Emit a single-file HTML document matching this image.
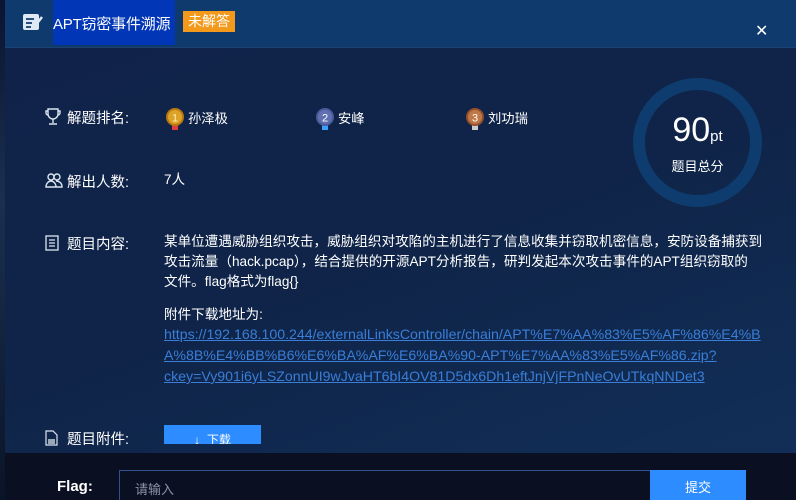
<!DOCTYPE html>
<html><head><meta charset="utf-8">
<style>
*{margin:0;padding:0;box-sizing:border-box}
body{width:796px;height:500px;overflow:hidden;background:#0a0f1e;font-family:"Liberation Sans","Noto Sans CJK SC",sans-serif;color:#fff;position:relative}
.left{position:absolute;left:0;top:0;width:5px;height:500px;background:linear-gradient(#0b1430,#1a3050 40%,#0a1428)}
.modal{position:absolute;left:5px;top:0;width:791px;height:500px;background:linear-gradient(160deg,#10224a 0%,#0f2448 50%,#12305a 100%);overflow:hidden}
.hdr{position:absolute;left:0;top:0;width:791px;height:48px;background:#0e3a6d;border-bottom:1px solid #1c4272}
.tbox{position:absolute;left:48px;top:0;width:122px;height:45px;background:#0136b6}
.title{position:absolute;left:48px;top:13px;font-size:15px;color:#fff;letter-spacing:-0.2px}
.tag{position:absolute;left:178px;top:11px;width:52px;height:21px;background:#f39a1c;font-size:14px;line-height:21px;text-align:center}
.close{position:absolute;left:750px;top:22px;font-size:16px;line-height:20px}
.lbl{position:absolute;left:62px;font-size:14.5px}
.ico{position:absolute;left:40px}
.txt{position:absolute;left:159px;font-size:13.6px;line-height:20px;white-space:nowrap}
.medal{position:absolute;top:107px;width:20px;height:24px}
.name{position:absolute;top:108px;font-size:13.3px}
.ring{position:absolute;left:628px;top:78px;width:129px;height:129px;border-radius:50%;border:12px solid #0f3c6e}
.link{color:#3a7ed8;text-decoration:underline;font-size:14.15px;line-height:20px}
.dl{position:absolute;left:159px;top:425px;width:97px;height:19px;background:#2d8cff;font-size:12px;text-align:center;line-height:30px;overflow:hidden}
.foot{position:absolute;left:0;top:453px;width:791px;height:47px;background:#0b0f22}
.inp{position:absolute;left:114px;top:17px;width:532px;height:32px;border:1px solid #34508f;color:#8a93a6;font-size:13px;padding:8px 0 0 15px}
.sub{position:absolute;left:645px;top:17px;width:96px;height:32px;background:#2d8cff;font-size:13px;text-align:center;line-height:36px}
</style></head><body>
<div class="left"></div>
<div class="modal">
 <div class="hdr">
  <svg style="position:absolute;left:17px;top:12px" width="22" height="20" viewBox="0 0 22 20"><rect x="1" y="2" width="16" height="16" rx="2" fill="#dfe9f3"/><path d="M4 7h8M4 11h6M4 15h5" stroke="#0e3a6d" stroke-width="1.8"/><path d="M13 14l7-9" stroke="#dfe9f3" stroke-width="2.5"/></svg>
  <div class="tbox"></div>
  <div class="title">APT窃密事件溯源</div>
  <div class="tag">未解答</div>
  <div class="close">✕</div>
 </div>
 <svg class="ico" style="top:107px" width="16" height="18" viewBox="0 0 16 18" fill="none" stroke="#dce6f0" stroke-width="1.4"><path d="M3 2h10v5a5 5 0 0 1-10 0z"/><path d="M3 4H1v2a2 2 0 0 0 2 2M13 4h2v2a2 2 0 0 1-2 2M8 12v4M4 17h8"/></svg>
 <div class="lbl" style="top:107px">解题排名:</div>
 <svg class="medal" style="left:160px" viewBox="0 0 20 24"><rect x="7" y="17" width="6" height="6" fill="#e23b3b"/><circle cx="10" cy="10" r="9" fill="#b87a0e"/><circle cx="10" cy="10" r="7" fill="#dca22a"/><text x="10" y="14.5" font-size="11" text-anchor="middle" fill="#fff3b0" font-family="Liberation Sans">1</text></svg>
 <div class="name" style="left:183px">孙泽极</div>
 <svg class="medal" style="left:310px" viewBox="0 0 20 24"><rect x="7" y="17" width="6" height="6" fill="#3aa0ff"/><circle cx="10" cy="10" r="9" fill="#4a5a9a"/><circle cx="10" cy="10" r="7" fill="#6070b0"/><text x="10" y="14.5" font-size="11" text-anchor="middle" fill="#fff" font-family="Liberation Sans">2</text></svg>
 <div class="name" style="left:333px">安峰</div>
 <svg class="medal" style="left:460px" viewBox="0 0 20 24"><rect x="7" y="17" width="6" height="6" fill="#ccc"/><circle cx="10" cy="10" r="9" fill="#94502a"/><circle cx="10" cy="10" r="7" fill="#c07848"/><text x="10" y="14.5" font-size="11" text-anchor="middle" fill="#fff" font-family="Liberation Sans">3</text></svg>
 <div class="name" style="left:483px">刘功瑞</div>
 <div class="ring"></div>
 <div style="position:absolute;left:628px;top:111px;width:129px;text-align:center"><span style="font-size:34px">90</span><span style="font-size:15px">pt</span></div>
 <div style="position:absolute;left:628px;top:156px;width:129px;text-align:center;font-size:13px">题目总分</div>

 <svg class="ico" style="top:172px" width="18" height="16" viewBox="0 0 18 16" fill="none" stroke="#dce6f0" stroke-width="1.4"><circle cx="6" cy="5" r="3"/><circle cx="12" cy="5" r="3"/><path d="M1 15c0-4 3-6 5-6s5 2 5 6zM11 9c2 0 6 1 6 6h-6"/></svg>
 <div class="lbl" style="top:171px">解出人数:</div>
 <div class="txt" style="top:170px">7人</div>

 <svg class="ico" style="top:235px" width="14" height="16" viewBox="0 0 14 16" fill="none" stroke="#dce6f0" stroke-width="1.3"><rect x="1" y="1" width="12" height="14"/><path d="M4 5h6M4 8h6M4 11h6"/></svg>
 <div class="lbl" style="top:233px">题目内容:</div>
 <div class="txt" style="top:232px">某单位遭遇威胁组织攻击，威胁组织对攻陷的主机进行了信息收集并窃取机密信息，安防设备捕获到<br>攻击流量（hack.pcap），结合提供的开源APT分析报告，研判发起本次攻击事件的APT组织窃取的<br>文件。flag格式为flag{}</div>
 <div class="txt" style="top:305px">附件下载地址为:</div>
 <div class="txt" style="top:324px"><span class="link">https://192.168.100.244/externalLinksController/chain/APT%E7%AA%83%E5%AF%86%E4%B</span><br><span class="link">A%8B%E4%BB%B6%E6%BA%AF%E6%BA%90-APT%E7%AA%83%E5%AF%86.zip?</span><br><span class="link">ckey=Vy901i6yLSZonnUI9wJvaHT6bI4OV81D5dx6Dh1eftJnjVjFPnNeOvUTkqNNDet3</span></div>

 <svg class="ico" style="top:430px" width="13" height="16" viewBox="0 0 13 16" fill="none" stroke="#dce6f0" stroke-width="1.2"><path d="M1 1h7l4 4v10H1z"/><rect x="3" y="9" width="7" height="5" fill="#9aa8b8" stroke="none"/></svg>
 <div class="lbl" style="top:428px">题目附件:</div>
 <div class="dl">↓ &nbsp;下载</div>

 <div class="foot">
  <div style="position:absolute;left:52px;top:25px;font-size:15px;font-weight:bold">Flag:</div>
  <div class="inp">请输入</div>
  <div class="sub">提交</div>
 </div>
</div>
</body></html>
